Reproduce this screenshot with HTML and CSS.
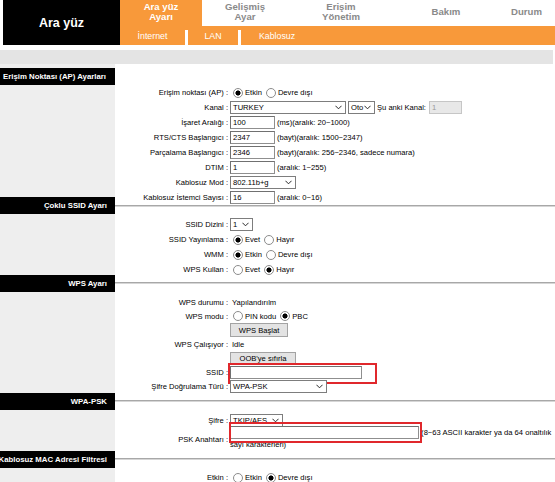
FILE: index.html
```html
<!DOCTYPE html>
<html lang="tr">
<head>
    <meta charset="UTF-8">
    <meta name="viewport" content="width=device-width, initial-scale=1.0">
    <title>Ara yüz Ayarı - Kablosuz</title>
    <link rel="stylesheet" href="styles.css">
</head>
<body>
    <div class="top">
        <div class="brand">Ara yüz</div>
        <div class="nav">
            <div class="tabs">
                <div class="tab active tab-1">Ara yüz<br>Ayarı</div>
                <div class="tab tab-2">Gelişmiş<br>Ayar</div>
                <div class="tab tab-3">Erişim<br>Yönetim</div>
                <div class="tab tab-4">Bakım</div>
                <div class="tab tab-5">Durum</div>
            </div>
            <div class="subnav">
                <span class="sub sub-1">İnternet</span><i class="bar"></i><span class="sub sub-2">LAN</span><i class="bar"></i><span class="sub sub-3">Kablosuz</span>
            </div>
        </div>
    </div>

    <div class="band"></div>

    <div class="main">
        <div class="side">
            <div class="title first">Erişim Noktası (AP) Ayarları</div>
            <div class="title title-ssid">Çoklu SSID Ayarı</div>
            <div class="title title-wps">WPS Ayarı</div>
            <div class="title title-psk">WPA-PSK</div>
            <div class="title title-mac">Kablosuz MAC Adresi Filtresi</div>
        </div>

        <div class="form">
            <!-- Erişim noktası -->
            <div class="group g1">
                <div class="row">
                    <div class="lbl">Erişim noktası (AP) :</div>
                    <div class="ctl">
                        <label class="opt"><input type="radio" name="ap" checked>Etkin</label>
                        <label class="opt"><input type="radio" name="ap">Devre dışı</label>
                    </div>
                </div>
                <div class="row">
                    <div class="lbl">Kanal :</div>
                    <div class="ctl">
                        <div class="sel w-kanal">TURKEY<svg class="chev" viewBox="0 0 8 5"><path d="M0.5 0.5 L4 4 L7.5 0.5"/></svg></div>
                        <div class="sel w-oto">Oto<svg class="chev" viewBox="0 0 8 5"><path d="M0.5 0.5 L4 4 L7.5 0.5"/></svg></div>
                        <span class="note">Şu anki Kanal:</span>
                        <input class="txt w-cur" type="text" value="1" disabled>
                    </div>
                </div>
                <div class="row">
                    <div class="lbl">İşaret Aralığı :</div>
                    <div class="ctl"><input class="txt w-num" type="text" value="100"><span class="hint">(ms)(aralık: 20~1000)</span></div>
                </div>
                <div class="row">
                    <div class="lbl">RTS/CTS Başlangıcı :</div>
                    <div class="ctl"><input class="txt w-num" type="text" value="2347"><span class="hint">(bayt)(aralık: 1500~2347)</span></div>
                </div>
                <div class="row">
                    <div class="lbl">Parçalama Başlangıcı :</div>
                    <div class="ctl"><input class="txt w-num" type="text" value="2346"><span class="hint">(bayt)(aralık: 256~2346, sadece numara)</span></div>
                </div>
                <div class="row">
                    <div class="lbl">DTIM :</div>
                    <div class="ctl"><input class="txt w-num" type="text" value="1"><span class="hint">(aralık: 1~255)</span></div>
                </div>
                <div class="row">
                    <div class="lbl">Kablosuz Mod :</div>
                    <div class="ctl">
                        <div class="sel w-mod">802.11b+g<svg class="chev" viewBox="0 0 8 5"><path d="M0.5 0.5 L4 4 L7.5 0.5"/></svg></div>
                    </div>
                </div>
                <div class="row">
                    <div class="lbl">Kablosuz İstemci Sayısı :</div>
                    <div class="ctl"><input class="txt w-num" type="text" value="16"><span class="hint">(aralık: 0~16)</span></div>
                </div>
            </div>

            <div class="sep"></div>

            <!-- Çoklu SSID -->
            <div class="group g2">
                <div class="row">
                    <div class="lbl">SSID Dizini :</div>
                    <div class="ctl">
                        <div class="sel w-idx">1<svg class="chev" viewBox="0 0 8 5"><path d="M0.5 0.5 L4 4 L7.5 0.5"/></svg></div>
                    </div>
                </div>
                <div class="row">
                    <div class="lbl">SSID Yayınlama :</div>
                    <div class="ctl">
                        <label class="opt"><input type="radio" name="bc" checked>Evet</label>
                        <label class="opt"><input type="radio" name="bc">Hayır</label>
                    </div>
                </div>
                <div class="row">
                    <div class="lbl">WMM :</div>
                    <div class="ctl">
                        <label class="opt"><input type="radio" name="wmm" checked>Etkin</label>
                        <label class="opt"><input type="radio" name="wmm">Devre dışı</label>
                    </div>
                </div>
                <div class="row">
                    <div class="lbl">WPS Kullan :</div>
                    <div class="ctl">
                        <label class="opt"><input type="radio" name="wps">Evet</label>
                        <label class="opt"><input type="radio" name="wps" checked>Hayır</label>
                    </div>
                </div>
            </div>

            <div class="sep"></div>

            <!-- WPS -->
            <div class="group g3">
                <div class="row">
                    <div class="lbl">WPS durumu :</div>
                    <div class="ctl"><span class="val">Yapılandırılm</span></div>
                </div>
                <div class="row">
                    <div class="lbl">WPS modu :</div>
                    <div class="ctl">
                        <label class="opt"><input type="radio" name="mode">PIN kodu</label>
                        <label class="opt"><input type="radio" name="mode" checked>PBC</label>
                    </div>
                </div>
                <div class="row">
                    <div class="lbl"></div>
                    <div class="ctl"><button class="btn w-start">WPS Başlat</button></div>
                </div>
                <div class="row">
                    <div class="lbl">WPS Çalışıyor :</div>
                    <div class="ctl"><span class="val">Idle</span></div>
                </div>
                <div class="row">
                    <div class="lbl"></div>
                    <div class="ctl"><button class="btn w-oob">OOB'ye sıfırla</button></div>
                </div>
                <div class="row">
                    <div class="lbl">SSID :</div>
                    <div class="ctl">
                        <input class="txt w-ssid" type="text" value="">
                        <span class="mark mark-ssid"></span>
                    </div>
                </div>
                <div class="row">
                    <div class="lbl">Şifre Doğrulama Türü :</div>
                    <div class="ctl">
                        <div class="sel w-auth">WPA-PSK<svg class="chev" viewBox="0 0 8 5"><path d="M0.5 0.5 L4 4 L7.5 0.5"/></svg></div>
                    </div>
                </div>
            </div>

            <div class="sep"></div>

            <!-- WPA-PSK -->
            <div class="group g4">
                <div class="row">
                    <div class="lbl">Şifre :</div>
                    <div class="ctl">
                        <div class="sel w-enc">TKIP/AES<svg class="chev" viewBox="0 0 8 5"><path d="M0.5 0.5 L4 4 L7.5 0.5"/></svg></div>
                    </div>
                </div>
                <div class="row tall">
                    <div class="lbl">PSK Anahtarı :</div>
                    <div class="ctl wrap">
                        <input class="txt w-psk" type="text" value=""> (8~63 ASCII karakter ya da 64 onaltılık sayı karakterleri)
                        <span class="mark mark-psk"></span>
                    </div>
                </div>
            </div>

            <div class="sep"></div>

            <!-- MAC filtresi -->
            <div class="group g5">
                <div class="row">
                    <div class="lbl">Etkin :</div>
                    <div class="ctl">
                        <label class="opt"><input type="radio" name="mac">Etkin</label>
                        <label class="opt"><input type="radio" name="mac" checked>Devre dışı</label>
                    </div>
                </div>
            </div>
        </div>
    </div>
</body>
</html>
```

FILE: styles.css
```css
* {
    box-sizing: border-box;
}

html, body {
    margin: 0;
    overflow: hidden;
}

body {
    font-family: "Liberation Sans", Arial, sans-serif;
    font-size: 7.6px;
    color: #000;
    background: #fff;
}

/* cabecera */
.top {
    display: flex;
    height: 45px;
}

.brand {
    margin-left: 3px;
    width: 117px;
    background: #000;
    color: #fff;
    font-weight: bold;
    font-size: 12.5px;
    display: flex;
    align-items: center;
    justify-content: center;
}

.nav {
    flex: 1;
    display: flex;
    flex-direction: column;
}

.tabs {
    display: flex;
    height: 26px;
}

.tab {
    display: flex;
    align-items: center;
    justify-content: center;
    text-align: center;
    font-weight: bold;
    font-size: 9.6px;
    line-height: 10px;
    color: #8a8a8a;
    padding-bottom: 2px;
}

.tab.active {
    background: #f8993a;
    color: #fff;
}

.tab-1 { width: 82px; }
.tab-2 { width: 86px; }
.tab-3 { width: 106px; }
.tab-4 { width: 104px; }
.tab-5 { flex: 1; }

.subnav {
    height: 19px;
    display: flex;
    background: #f8993a;
}

.sub {
    color: #fff;
    font-size: 8.8px;
    display: flex;
    align-items: center;
    justify-content: center;
}

.sub-1 { width: 65px; }
.sub-2 { width: 50px; }
.sub-3 { width: 72px; }

.bar {
    width: 3px;
    margin-top: 4px;
    background: #fff;
}

.band {
    margin: 5px 2px 0 0;
    height: 14px;
    background: #e4e4e4;
}

/* cuerpo */
.main {
    display: grid;
    grid-template-columns: 115px 1fr;
    min-height: calc(100vh - 64px);
}

.side {
    background: #eeeeee;
    padding-top: 4px;
    display: flex;
    flex-direction: column;
}

.title {
    height: 17px;
    flex-shrink: 0;
    background: #000;
    color: #fff;
    font-weight: bold;
    font-size: 7.8px;
    white-space: nowrap;
    display: flex;
    align-items: center;
    justify-content: flex-end;
    padding-right: 8px;
}

.title.first {
    justify-content: flex-start;
    padding: 0 0 0 3px;
}

.title-ssid { margin-top: 112px; }
.title-wps { margin-top: 61px; }
.title-psk { margin-top: 101px; }
.title-mac { margin-top: 41px; }

.form {
    padding-top: 21px;
}

.sep {
    height: 2px;
    background: #a8a8a8;
    border-bottom: 1px solid #d6d6d6;
}

.g2 { margin-top: 10px; }
.g3 { margin-top: 11px; }
.g4 { margin-top: 12px; }
.g5 { margin-top: 10px; }

.g2 + .sep { margin-top: 5px; }
.g3 + .sep { margin-top: 7px; }
.g4 + .sep { margin-top: 6px; }

.row {
    display: grid;
    grid-template-columns: 113px 1fr;
    align-items: center;
    height: 15px;
}

.g3 .row { height: 14px; }
.g4 .row { height: 13px; }
.g4 .row.tall { height: 25px; }

.lbl {
    text-align: right;
    white-space: nowrap;
}

.ctl {
    position: relative;
    display: flex;
    align-items: center;
    padding-left: 2px;
    white-space: nowrap;
}

.ctl.wrap {
    display: block;
    white-space: normal;
    line-height: 12px;
    align-self: start;
}

.val {
    margin-left: 2px;
}

/* controles */
.opt {
    display: inline-flex;
    align-items: center;
    margin-right: 1px;
}

.opt input {
    appearance: none;
    -webkit-appearance: none;
    width: 10px;
    height: 10px;
    margin: 0 2px 0 3px;
    border: 1px solid #8c8c8c;
    border-radius: 50%;
    background: #fff;
}

.opt input:checked {
    background: radial-gradient(circle, #000 0 2.2px, #fff 2.9px);
}

.txt {
    height: 13px;
    padding: 0 2px;
    border: 1px solid #8f8f8f;
    border-top-color: #707070;
    border-left-color: #707070;
    font: inherit;
    color: #000;
    background: #fff;
    outline: none;
}

.txt:disabled {
    background: #e8e8e8;
    border-color: #c6c6c6;
    color: #9a9a9a;
}

.w-num { width: 45px; }
.w-cur { width: 33px; margin-left: 3px; }
.w-ssid { width: 132px; }
.w-psk { width: 189px; vertical-align: top; margin-top: -1px; }

.hint {
    margin-left: 2px;
}

.note {
    margin-left: 2px;
}

.sel {
    display: inline-flex;
    align-items: center;
    justify-content: space-between;
    height: 13px;
    padding: 0 3px 0 2px;
    border: 1px solid #7d7d7d;
    background: #fff;
}

.chev {
    width: 7px;
    height: 5px;
    fill: none;
    stroke: #222;
    stroke-width: 1.1;
}

.w-kanal { width: 116px; margin-right: 2px; }
.w-oto { width: 27px; }
.w-mod { width: 66px; }
.w-idx { width: 23px; }
.w-auth { width: 97px; }
.w-enc { width: 53px; }

.btn {
    height: 14px;
    padding: 0;
    border: 1px solid #a3a3a3;
    background: #e3e3e3;
    font: inherit;
    color: #000;
}

.w-start { width: 58px; }
.w-oob { width: 66px; height: 13px; }

/* recuadros rojos */
.mark {
    position: absolute;
    border: 2px solid #e0282c;
    pointer-events: none;
}

.mark-ssid {
    left: 0;
    top: -3px;
    width: 149px;
    height: 21px;
}

.mark-psk {
    left: 1px;
    top: -5px;
    width: 193px;
    height: 21px;
}
```
